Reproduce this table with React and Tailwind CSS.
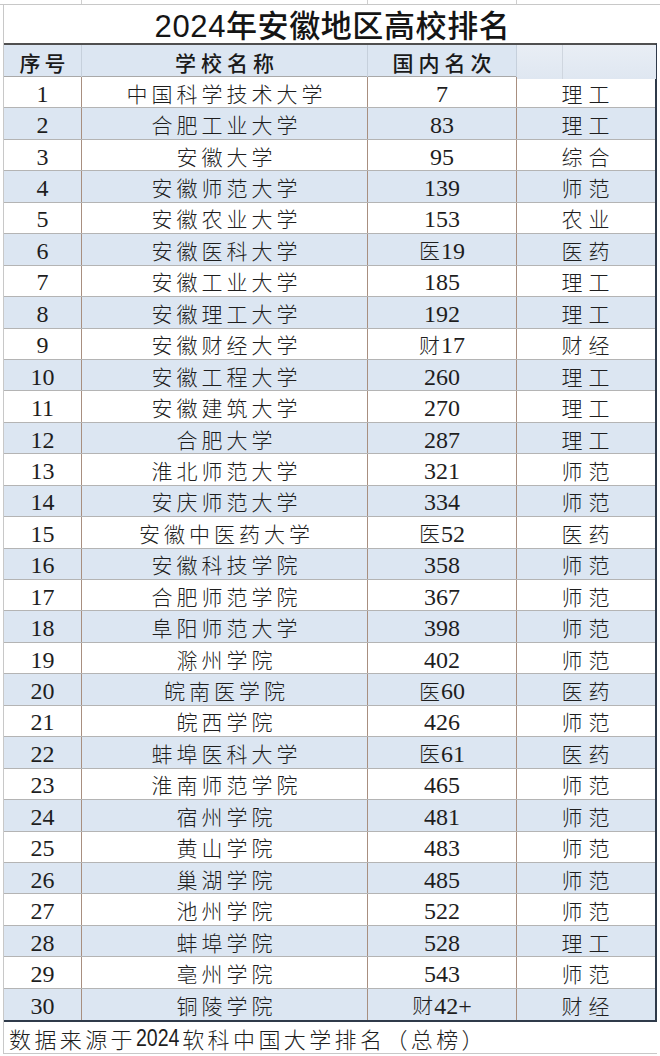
import React from "react";

const rows = [
  ["1", "中国科学技术大学", "7", "理工"],
  ["2", "合肥工业大学", "83", "理工"],
  ["3", "安徽大学", "95", "综合"],
  ["4", "安徽师范大学", "139", "师范"],
  ["5", "安徽农业大学", "153", "农业"],
  ["6", "安徽医科大学", "医19", "医药"],
  ["7", "安徽工业大学", "185", "理工"],
  ["8", "安徽理工大学", "192", "理工"],
  ["9", "安徽财经大学", "财17", "财经"],
  ["10", "安徽工程大学", "260", "理工"],
  ["11", "安徽建筑大学", "270", "理工"],
  ["12", "合肥大学", "287", "理工"],
  ["13", "淮北师范大学", "321", "师范"],
  ["14", "安庆师范大学", "334", "师范"],
  ["15", "安徽中医药大学", "医52", "医药"],
  ["16", "安徽科技学院", "358", "师范"],
  ["17", "合肥师范学院", "367", "师范"],
  ["18", "阜阳师范大学", "398", "师范"],
  ["19", "滁州学院", "402", "师范"],
  ["20", "皖南医学院", "医60", "医药"],
  ["21", "皖西学院", "426", "师范"],
  ["22", "蚌埠医科大学", "医61", "医药"],
  ["23", "淮南师范学院", "465", "师范"],
  ["24", "宿州学院", "481", "师范"],
  ["25", "黄山学院", "483", "师范"],
  ["26", "巢湖学院", "485", "师范"],
  ["27", "池州学院", "522", "师范"],
  ["28", "蚌埠学院", "528", "理工"],
  ["29", "亳州学院", "543", "师范"],
  ["30", "铜陵学院", "财42+", "财经"],
];

const serif = { fontFamily: '"Liberation Serif", "Noto Sans CJK SC", serif' };
const cjk = { fontFamily: '"Noto Sans CJK SC", sans-serif' };

export default function App() {
  return (
    <div className="w-[660px] h-[1056px] bg-white overflow-hidden text-[#1e1e1e]" style={serif}>
      {/* top strip */}
      <div className="h-[5px] border-b border-[#c8c8c8] flex pl-[3px]">
        <div className="w-[79px] border-r border-[#cfcfcf]" />
        <div className="w-[286px] border-r border-[#cfcfcf]" />
        <div className="w-[149px] border-r border-[#cfcfcf]" />
      </div>
      <div className="ml-[3px] border-l border-[#c8c8c8] w-[654px]">
        {/* title */}
        <div className="h-[38px] flex items-center justify-center pl-[4px] pt-[5px] text-[31px] leading-none font-medium tracking-[0.6px] text-[#151515]" style={{ fontFamily: '"Liberation Sans", "Noto Sans CJK SC", sans-serif' }}>
          2024年安徽地区高校排名
        </div>
        <div className="border-t-2 border-r-2 border-b-2 border-t-[#505050] border-r-[#2f3a4a] border-b-[#2f3a4a]">
          {/* header */}
          <div className="h-[32px] grid grid-cols-[78px_286px_149px_139px] bg-[#dce6f2] border-b border-[#a9a9a9] text-[21px] font-medium text-[#1a1a1a]" style={cjk}>
            <div className="flex items-center justify-center pt-[2px] tracking-[4px] pl-[4px] border-r border-[#c6d0dc]">序号</div>
            <div className="flex items-center justify-center pt-[2px] tracking-[5px] pl-[5px] border-r border-[#c6d0dc]">学校名称</div>
            <div className="flex items-center justify-center pt-[2px] tracking-[5px] pl-[5px] border-r border-[#c6d0dc]">国内名次</div>
            <div className="flex bg-gradient-to-b from-[#e9eef5] to-[#dfe7f1]">
              <div className="w-[46px] border-r border-[#cfd6df]" />
            </div>
          </div>
          {rows.map((r, i) => (
            <div
              key={r[0]}
              className={`h-[31.45px] grid grid-cols-[78px_286px_149px_139px] border-b border-[#b4b4b4] last:border-b-0 ${i % 2 === 1 ? "bg-[#dce6f2]" : "bg-white"}`}
            >
              <div className="flex items-center justify-center pt-[3px] text-[24px] leading-none border-r border-[#a88f80]" style={serif}>{r[0]}</div>
              <div className="flex items-center justify-center pt-[2px] text-[21px] leading-none font-light tracking-[4px] pl-[4px] border-r border-[#a88f80]" style={cjk}>{r[1]}</div>
              <div className="flex items-center justify-center pt-[3px] text-[24px] leading-none border-r border-[#a88f80]" style={serif}>
                {r[2].split(/(\d+\+?)/).filter(Boolean).map((p, k) =>
                  /\d/.test(p) ? <span key={k}>{p}</span> : <span key={k} className="text-[21px] font-light mr-[1px] relative top-[-1px]" style={cjk}>{p}</span>
                )}
              </div>
              <div className="flex items-center justify-center pt-[2px] text-[21px] leading-none font-light tracking-[6px] pl-[4px]" style={cjk}>{r[3]}</div>
            </div>
          ))}
        </div>
        {/* footer */}
        <div className="h-[32px] flex items-center pl-[5px] pt-[1px] text-[22px] leading-none font-light tracking-[3.4px] border-b border-[#c8c8c8]" style={cjk}>
          数据来源于<span className="tracking-[0px] text-[23px] inline-block scale-x-[0.85] origin-left mr-[-5px]" style={{ fontFamily: '"Liberation Sans", sans-serif' }}>2024</span>软科中国大学排名（总榜）
        </div>
      </div>
    </div>
  );
}
